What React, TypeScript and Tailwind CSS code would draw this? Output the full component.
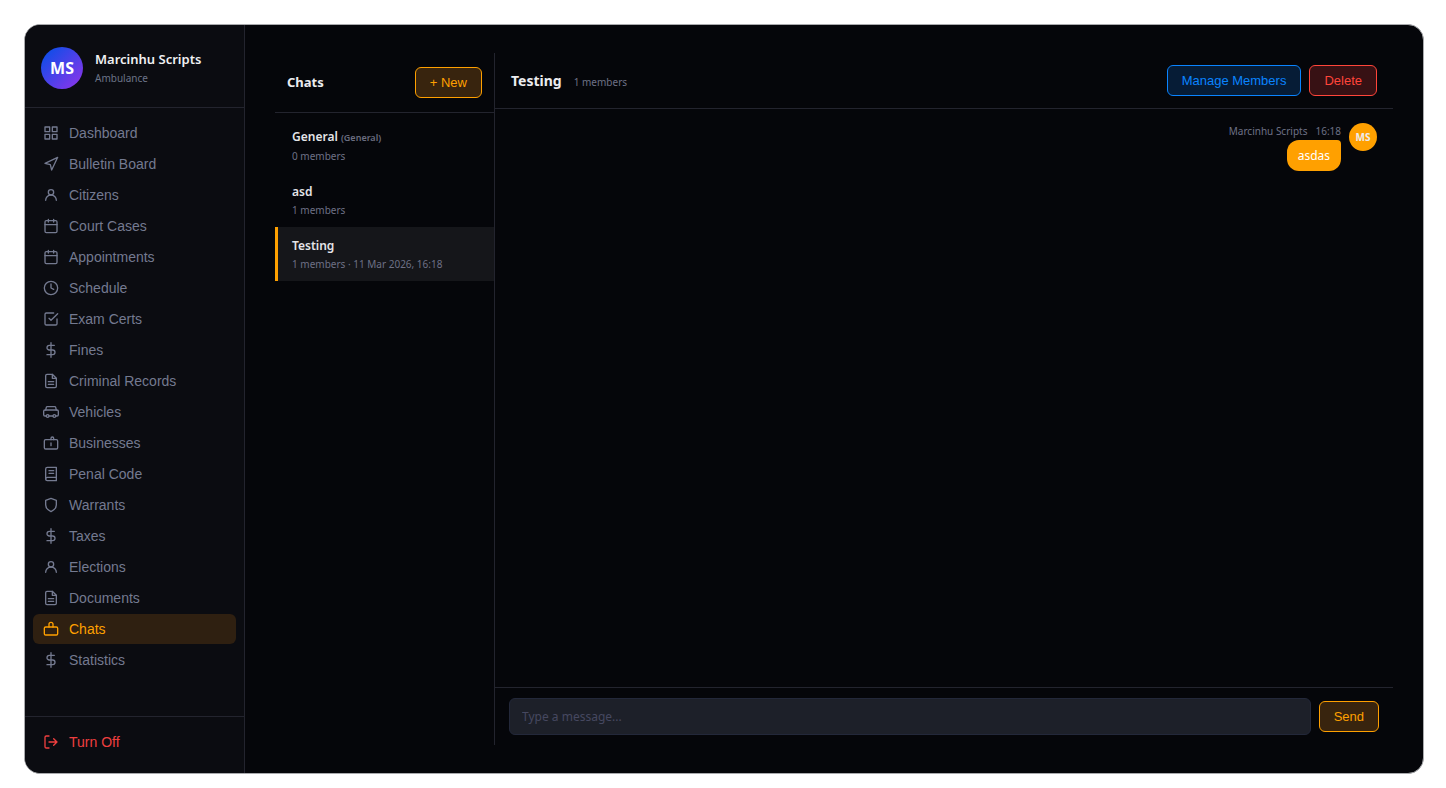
import type { ReactNode } from "react";
import clsx from "clsx";

const icons: Record<string, ReactNode> = {
  grid: (
    <>
      <rect x="3" y="3" width="7" height="7" />
      <rect x="14" y="3" width="7" height="7" />
      <rect x="14" y="14" width="7" height="7" />
      <rect x="3" y="14" width="7" height="7" />
    </>
  ),
  navigation: <polygon points="3 11 22 2 13 21 11 13 3 11" />,
  user: (
    <>
      <circle cx="12" cy="8" r="4" />
      <path d="M4 20c0-4.4 3.6-8 8-8s8 3.6 8 8" />
    </>
  ),
  calendar: (
    <>
      <rect x="3" y="4" width="18" height="18" rx="2" />
      <path d="M16 2v4M8 2v4M3 10h18" />
    </>
  ),
  clock: (
    <>
      <circle cx="12" cy="12" r="10" />
      <polyline points="12 6 12 12 16 14" />
    </>
  ),
  check: (
    <>
      <polyline points="9 11 12 14 22 4" />
      <path d="M21 12v7a2 2 0 0 1-2 2H5a2 2 0 0 1-2-2V5a2 2 0 0 1 2-2h11" />
    </>
  ),
  dollar: <path d="M12 1v22M17 5H9.5a3.5 3.5 0 0 0 0 7h5a3.5 3.5 0 0 1 0 7H6" />,
  file: (
    <>
      <path d="M14 2H6a2 2 0 0 0-2 2v16a2 2 0 0 0 2 2h12a2 2 0 0 0 2-2V8z" />
      <path d="M14 2v6h6M16 13H8M16 17H8" />
    </>
  ),
  car: (
    <>
      <path d="M5 18H3a2 2 0 0 1-2-2v-5a2 2 0 0 1 2-2h18a2 2 0 0 1 2 2v5a2 2 0 0 1-2 2h-2M9 18h6" />
      <path d="M4 9l1-4a1.5 1.5 0 0 1 1.5-1h11a1.5 1.5 0 0 1 1.5 1l1 4" />
      <circle cx="7" cy="18" r="2" />
      <circle cx="17" cy="18" r="2" />
    </>
  ),
  business: (
    <>
      <rect x="2" y="7" width="20" height="14" rx="2" />
      <path d="M16 7V5a2 2 0 0 0-4 0v2M12 12v4" />
    </>
  ),
  book: (
    <>
      <path d="M4 19.5A2.5 2.5 0 0 1 6.5 17H20" />
      <path d="M6.5 2H20v20H6.5A2.5 2.5 0 0 1 4 19.5v-15A2.5 2.5 0 0 1 6.5 2z" />
      <path d="M9 7h7M9 11h7" />
    </>
  ),
  shield: <path d="M12 22s8-4 8-10V5l-8-3-8 3v7c0 6 8 10 8 10z" />,
  chat: (
    <>
      <rect x="2" y="9" width="20" height="12" rx="2" />
      <path d="M9 9V5a3 3 0 0 1 6 0v4" />
    </>
  ),
  logout: (
    <>
      <path d="M9 21H5a2 2 0 0 1-2-2V5a2 2 0 0 1 2-2h4" />
      <path d="M16 17l5-5-5-5M21 12H9" />
    </>
  ),
};

const navItems = [
  { label: "Dashboard", icon: "grid" },
  { label: "Bulletin Board", icon: "navigation" },
  { label: "Citizens", icon: "user" },
  { label: "Court Cases", icon: "calendar" },
  { label: "Appointments", icon: "calendar" },
  { label: "Schedule", icon: "clock" },
  { label: "Exam Certs", icon: "check" },
  { label: "Fines", icon: "dollar" },
  { label: "Criminal Records", icon: "file" },
  { label: "Vehicles", icon: "car" },
  { label: "Businesses", icon: "business" },
  { label: "Penal Code", icon: "book" },
  { label: "Warrants", icon: "shield" },
  { label: "Taxes", icon: "dollar" },
  { label: "Elections", icon: "user" },
  { label: "Documents", icon: "file" },
  { label: "Chats", icon: "chat", active: true },
  { label: "Statistics", icon: "dollar" },
];

const chats = [
  { name: "General", tag: "(General)", info: "0 members" },
  { name: "asd", info: "1 members" },
  { name: "Testing", info: "1 members · 11 Mar 2026, 16:18", active: true },
];

function Icon({ name }: { name: string }) {
  return (
    <svg
      viewBox="0 0 24 24"
      className="size-4 shrink-0"
      fill="none"
      stroke="currentColor"
      strokeWidth="2"
      strokeLinecap="round"
      strokeLinejoin="round"
      aria-hidden="true"
    >
      {icons[name]}
    </svg>
  );
}

const tones = {
  orange: "border-[#ffa000] bg-[#38240e] text-[#ffa000]",
  blue: "border-[#0a84ff] bg-[#061c36] text-[#0a84ff]",
  red: "border-[#ff453a] bg-[#371114] text-[#ff453a]",
};

function Button({ tone, children }: { tone: keyof typeof tones; children: ReactNode }) {
  return (
    <button
      className={clsx(
        "shrink-0 rounded-md border px-3.5 py-[7px] font-['Liberation_Sans',sans-serif] text-[13px] leading-[15px]",
        tones[tone]
      )}
    >
      {children}
    </button>
  );
}

function Sidebar() {
  return (
    <aside className="flex w-[220px] shrink-0 flex-col border-r border-[#23242e] bg-[#0b0c11]">
      <div className="flex items-center gap-3 border-b border-[#23242e] px-4 pt-[22px] pb-[18px]">
        <div className="flex size-[42px] items-center justify-center rounded-full bg-[linear-gradient(135deg,#0050e8,#9333ea)] text-base font-bold text-white">
          MS
        </div>
        <div>
          <div className="text-[13px] leading-5 font-semibold text-[#f0f0f2]">Marcinhu Scripts</div>
          <div className="text-[10px] leading-[18px] text-[#6c7488]">Ambulance</div>
        </div>
      </div>

      <nav className="flex flex-1 flex-col gap-px px-2 pt-2.5 font-['Liberation_Sans',sans-serif]">
        {navItems.map((item) => (
          <a
            key={item.label}
            href="#"
            className={clsx(
              "flex h-[30px] items-center gap-2.5 rounded-md px-2.5 text-sm",
              item.active ? "bg-[#2f2011] text-[#ffa000]" : "text-[#747a90]"
            )}
          >
            <Icon name={item.icon} />
            {item.label}
          </a>
        ))}
      </nav>

      <div className="border-t border-[#23242e] px-2 pt-2.5 pb-4">
        <button className="flex h-[30px] w-full items-center gap-2.5 px-2.5 font-['Liberation_Sans',sans-serif] text-sm text-[#ef3f3f]">
          <Icon name="logout" />
          Turn Off
        </button>
      </div>
    </aside>
  );
}

function ChatList() {
  return (
    <section className="w-[220px] shrink-0 border-r border-[#23242e]">
      <div className="flex items-center justify-between border-b border-[#23242e] px-3 py-3.5">
        <h2 className="text-[13px] font-bold text-[#ececf0]">Chats</h2>
        <Button tone="orange">+ New</Button>
      </div>
      <div className="pt-[5px]">
        {chats.map((chat) => (
          <button
            key={chat.name}
            className={clsx(
              "block w-full border-l-[3px] px-3.5 py-[9px] text-left",
              chat.active ? "border-[#ffa000] bg-[#15161a]" : "border-transparent"
            )}
          >
            <div className="text-[12px] leading-5 font-semibold text-[#e4e4e8]">
              {chat.name} {chat.tag && <span className="text-[9px] text-[#6a6d80]">{chat.tag}</span>}
            </div>
            <div className="text-[10px] leading-4 text-[#6e7186]">{chat.info}</div>
          </button>
        ))}
      </div>
    </section>
  );
}

function Conversation() {
  return (
    <section className="flex min-w-0 flex-1 flex-col">
      <header className="flex items-center gap-2 border-b border-[#23242e] px-4 py-3">
        <div className="flex flex-1 items-baseline gap-3">
          <h1 className="text-sm font-bold text-[#ececf0]">Testing</h1>
          <span className="text-[10px] text-[#6e7186]">1 members</span>
        </div>
        <Button tone="blue">Manage Members</Button>
        <Button tone="red">Delete</Button>
      </header>

      <div className="flex flex-1 items-start justify-end gap-2 px-4 py-3.5">
        <div className="flex flex-col items-end">
          <div className="flex gap-2 text-[10px] leading-[17px] text-[#6e7186]">
            <span>Marcinhu Scripts</span>
            <span>16:18</span>
          </div>
          <div className="rounded-xl rounded-tr-sm bg-[#ffa000] px-[11px] py-1.5 text-[12px] leading-[19px] text-white">
            asdas
          </div>
        </div>
        <div className="flex size-7 items-center justify-center rounded-full bg-[#ffa000] text-[10px] font-bold text-[#ececf0]">
          MS
        </div>
      </div>

      <form className="flex items-center gap-2 border-t border-[#23242e] px-3.5 py-2.5">
        <input
          type="text"
          aria-label="Message"
          placeholder="Type a message..."
          className="h-[37px] min-w-0 flex-1 rounded-md border border-[#23283a] bg-[#1d2029] px-3 text-[12px] text-[#ececf0] placeholder:text-[#464860]"
        />
        <Button tone="orange">Send</Button>
      </form>
    </section>
  );
}

export default function App() {
  return (
    <div className="flex h-screen bg-white pt-6 pr-[22px] pb-3.5 pl-6 font-['Noto_Sans',sans-serif]">
      <div className="flex flex-1 overflow-hidden rounded-2xl border border-[#a9aaad] bg-[#05060a]">
        <Sidebar />
        <main className="flex min-w-0 flex-1 px-[30px] py-7">
          <ChatList />
          <Conversation />
        </main>
      </div>
    </div>
  );
}
